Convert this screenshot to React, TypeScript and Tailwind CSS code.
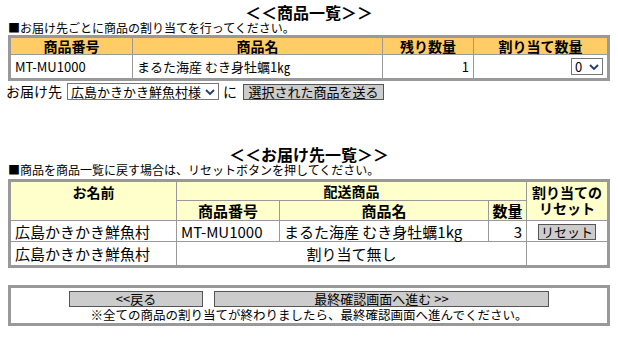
import React from 'react';

const font = "font-['MS_PGothic','Noto_Sans_CJK_JP',sans-serif]";

function Chevron() {
  return (
    <svg width="10" height="7" viewBox="0 0 10 7" className="pointer-events-none absolute right-[4px] top-1/2 -translate-y-1/2">
      <path d="M1 1.5 L5 5.5 L9 1.5" fill="none" stroke="#1e3a6e" strokeWidth="1.8" />
    </svg>
  );
}

function Select({ value, width, options }: { value: string; width: string; options: string[] }) {
  return (
    <span className={`relative inline-block align-middle ${width}`}>
      <select
        defaultValue={value}
        className="h-[17px] w-full appearance-none border border-[#767676] bg-white pl-[3px] pr-[16px] text-[13px] leading-[15px] text-black outline-none"
      >
        {options.map((o) => (
          <option key={o}>{o}</option>
        ))}
      </select>
      <Chevron />
    </span>
  );
}

export default function App() {
  const th1 = 'border border-[#999] bg-[#FFCC66] h-[18px] text-[14px] font-bold leading-[16px] text-center';
  const td1 = 'border border-[#999] h-[25px] px-[4px] text-[13px] leading-[15px]';
  const th2 = 'border border-[#999] bg-[#FFFFCC] text-[14px] font-bold leading-[16px] text-center';
  const td2 = 'border border-[#999] px-[4px] text-[15px] leading-[17px]';
  const btn = 'h-[16px] whitespace-nowrap border border-[#555] bg-[#CCCCCC] text-[13px] leading-[14px] text-black';

  return (
    <div className={`min-h-screen bg-white px-2 text-black ${font}`}>
      <div className="pt-[4px] text-center text-[16px] font-bold leading-[17px]">＜＜商品一覧＞＞</div>
      <div className="pt-[1px] text-[12px] leading-[12px]">■お届け先ごとに商品の割り当てを行ってください。</div>

      <table className="mt-[1px] w-full border-collapse border-[3px] border-[#999]">
        <thead>
          <tr>
            <th className={`${th1} w-[123px]`}>商品番号</th>
            <th className={th1}>商品名</th>
            <th className={`${th1} w-[91px]`}>残り数量</th>
            <th className={`${th1} w-[135px]`}>割り当て数量</th>
          </tr>
        </thead>
        <tbody>
          <tr>
            <td className={td1}>MT-MU1000</td>
            <td className={td1}>まるた海産 むき身牡蠣1㎏</td>
            <td className={`${td1} text-right`}>1</td>
            <td className={`${td1} text-right`}>
              <Select value="0" width="w-[32px]" options={['0', '1']} />
            </td>
          </tr>
        </tbody>
      </table>

      <div className="mt-[2px] flex items-center text-[14px] leading-[17px]">
        <span className="-ml-[2px] mr-[5px]">お届け先</span>
        <Select value="広島かきかき鮮魚村様" width="w-[152px]" options={['広島かきかき鮮魚村様']} />
        <span className="ml-[4px] mr-[6px]">に</span>
        <button className={`${btn} w-[141px]`}>選択された商品を送る</button>
      </div>

      <div className="pt-[46px] text-center text-[16px] font-bold leading-[17px]">＜＜お届け先一覧＞＞</div>
      <div className="pt-[1px] text-[12px] leading-[12px]">■商品を商品一覧に戻す場合は、リセットボタンを押してください。</div>

      <table className="mt-[3px] w-full border-collapse border-[3px] border-[#999]">
        <thead>
          <tr>
            <th rowSpan={2} className={`${th2} w-[167px] pt-[2px] align-top`}>お名前</th>
            <th colSpan={3} className={`${th2} h-[20px]`}>配送商品</th>
            <th rowSpan={2} className={`${th2} w-[82px] pt-[2px] align-top leading-[15px]`}>
              割り当ての
              <br />
              リセット
            </th>
          </tr>
          <tr>
            <th className={`${th2} h-[20px] w-[103px] text-[15px]`}>商品番号</th>
            <th className={`${th2} text-[15px]`}>商品名</th>
            <th className={`${th2} w-[38px] text-[15px]`}>数量</th>
          </tr>
        </thead>
        <tbody>
          <tr>
            <td className={`${td2} h-[21px]`}>広島かきかき鮮魚村</td>
            <td className={td2}>MT-MU1000</td>
            <td className={td2}>まるた海産 むき身牡蠣1kg</td>
            <td className={`${td2} text-right`}>3</td>
            <td className={`${td2} text-center`}>
              <button className={`${btn} w-[58px]`}>リセット</button>
            </td>
          </tr>
          <tr>
            <td className={`${td2} h-[25px]`}>広島かきかき鮮魚村</td>
            <td colSpan={3} className={`${td2} text-center`}>割り当て無し</td>
            <td className={td2}></td>
          </tr>
        </tbody>
      </table>

      <div className="mt-[17px] border-[3px] border-[#999] pt-[3px] pb-[1px]">
        <div className="flex justify-center gap-[11px]">
          <button className={`${btn} w-[134px]`}>&lt;&lt;戻る</button>
          <button className={`${btn} w-[335px]`}>最終確認画面へ進む &gt;&gt;</button>
        </div>
        <div className="pt-[1px] text-center text-[12.5px] leading-[14px]">
          ※全ての商品の割り当てが終わりましたら、最終確認画面へ進んでください。
        </div>
      </div>
    </div>
  );
}
